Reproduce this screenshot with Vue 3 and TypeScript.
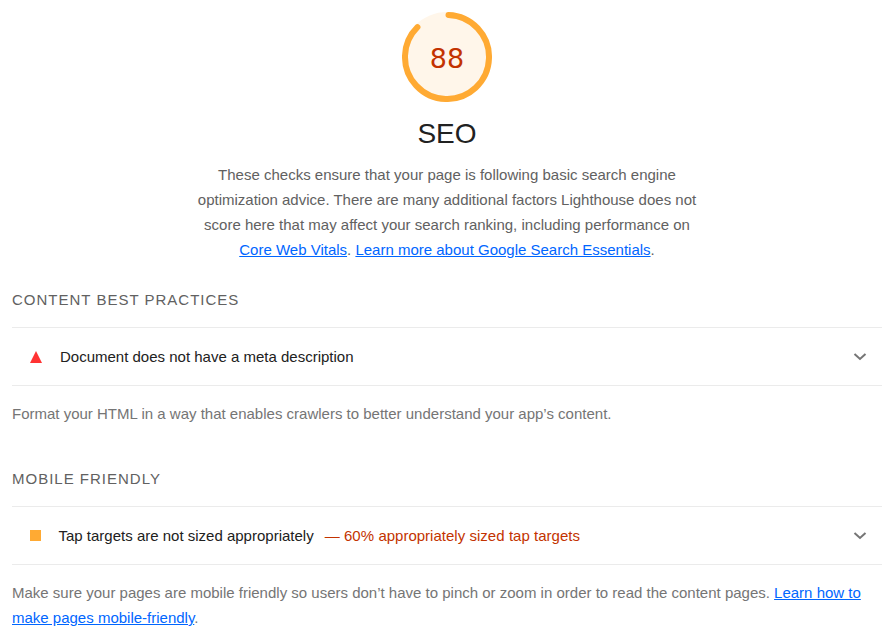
<script setup lang="ts">
interface Audit {
  shape: 'fail' | 'average'
  title: string
  display?: string
}

interface AuditGroup {
  id: string
  heading: string
  audits: Audit[]
  description: string
  link?: string
}

const score = 88
const radius = 56
const stroke = 8
const circumference = 2 * Math.PI * radius
const arcLength = (score / 100) * circumference - stroke / 2
const arcStart = -90 + (0.25 * stroke * 360) / circumference

const groups: AuditGroup[] = [
  {
    id: 'content',
    heading: 'Content Best Practices',
    audits: [{ shape: 'fail', title: 'Document does not have a meta description' }],
    description: 'Format your HTML in a way that enables crawlers to better understand your app’s content.',
  },
  {
    id: 'mobile',
    heading: 'Mobile Friendly',
    audits: [
      {
        shape: 'average',
        title: 'Tap targets are not sized appropriately',
        display: '60% appropriately sized tap targets',
      },
    ],
    description:
      'Make sure your pages are mobile friendly so users don’t have to pinch or zoom in order to read the content pages.',
    link: 'Learn how to make pages mobile-friendly',
  },
]
</script>

<template>
  <main class="report">
    <header class="category">
      <div class="gauge">
        <svg class="gauge-ring" viewBox="0 0 120 120">
          <circle class="gauge-base" cx="60" cy="60" r="60" />
          <circle
            class="gauge-arc"
            cx="60"
            cy="60"
            :r="radius"
            :stroke-width="stroke"
            :stroke-dasharray="`${arcLength} ${circumference}`"
            :transform="`rotate(${arcStart} 60 60)`"
          />
        </svg>
        <span class="gauge-score">{{ score }}</span>
      </div>
      <h1 class="category-title">SEO</h1>
      <p class="category-description">
        These checks ensure that your page is following basic search engine optimization advice. There are many
        additional factors Lighthouse does not score here that may affect your search ranking, including performance on
        <a href="#">Core Web Vitals</a>. <a href="#">Learn more about Google Search Essentials</a>.
      </p>
    </header>

    <section v-for="group in groups" :key="group.id" class="group">
      <h2 class="group-heading">{{ group.heading }}</h2>
      <div v-for="audit in group.audits" :key="audit.title" class="audit">
        <svg v-if="audit.shape === 'fail'" class="marker marker-fail" viewBox="0 0 12 12">
          <path d="M6 0L12 12H0Z" />
        </svg>
        <span v-else class="marker marker-average"></span>
        <span class="audit-title">{{ audit.title }}</span>
        <span v-if="audit.display" class="audit-display">— {{ audit.display }}</span>
        <svg class="chevron" viewBox="0 0 14 8">
          <path d="M1.5 1L7 6L12.5 1" />
        </svg>
      </div>
      <p class="group-description">
        {{ group.description }}
        <template v-if="group.link"><a href="#">{{ group.link }}</a>.</template>
      </p>
    </section>
  </main>
</template>

<style>
body {
  margin: 0;
  background: #fff;
}
</style>

<style scoped>
.report {
  box-sizing: border-box;
  width: 896px;
  height: 638px;
  padding: 12px 14px 0 12px;
  overflow: hidden;
  font-family: "Liberation Sans", Arial, sans-serif;
  font-size: 15px;
  line-height: 25px;
  color: #212121;
}

.category {
  display: flex;
  flex-direction: column;
  align-items: center;
}

.gauge {
  display: grid;
  width: 90px;
  height: 90px;
  place-items: center;
}

.gauge-ring,
.gauge-score {
  grid-area: 1 / 1;
}

.gauge-ring {
  width: 90px;
  height: 90px;
}

.gauge-base {
  fill: #fff6ea;
}

.gauge-arc {
  fill: none;
  stroke: #fa3;
  stroke-linecap: round;
}

.gauge-score {
  padding-top: 4px;
  font-family: "DejaVu Sans", sans-serif;
  font-size: 27px;
  line-height: 32px;
  color: #c33300;
}

.category-title {
  margin: 14px 0 0;
  font-size: 28px;
  font-weight: 400;
  line-height: 36px;
}

.category-description {
  width: 500px;
  margin: 10px 0 0;
  text-align: center;
  color: #616161;
}

a {
  color: #06f;
  text-decoration: underline;
}

.group {
  padding-top: 25px;
}

.group + .group {
  padding-top: 40px;
}

.group-heading {
  margin: 0 0 15px;
  font-size: 15px;
  font-weight: 400;
  line-height: 25px;
  letter-spacing: 1px;
  text-transform: uppercase;
  color: #616161;
}

.audit {
  display: flex;
  align-items: center;
  height: 57px;
  padding: 0 15px 0 18px;
  border-top: 1px solid #ebebeb;
  border-bottom: 1px solid #ebebeb;
}

.marker {
  flex: none;
}

.marker-fail {
  width: 12px;
  height: 12px;
  margin-right: 18px;
  fill: #f33;
}

.marker-average {
  width: 11px;
  height: 11px;
  margin-right: 17.5px;
  background: #fa3;
}

.audit-display {
  margin-left: 11px;
  word-spacing: 0.2px;
  color: #c33300;
}

.chevron {
  width: 14px;
  height: 8px;
  margin-left: auto;
  fill: none;
  stroke: #757575;
  stroke-width: 2;
}

.group-description {
  margin: 15px 0 0;
  color: #757575;
}
</style>
